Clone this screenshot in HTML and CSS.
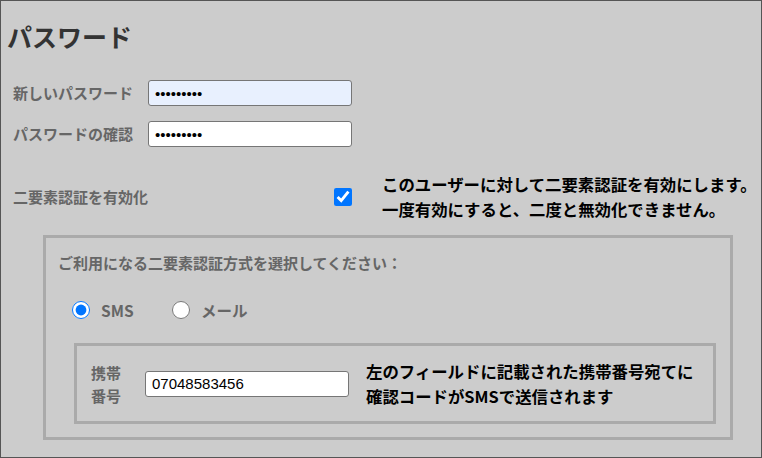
FILE: index.html
```html
<!DOCTYPE html>
<html lang="ja">
<head>
    <meta charset="UTF-8">
    <meta name="viewport" content="width=device-width, initial-scale=1.0">
    <title>パスワード</title>
    <link rel="stylesheet" href="styles.css">
</head>
<body>
    <div class="page">
        <h1 class="title">パスワード</h1>

        <div class="form-row">
            <label class="field-label" for="new-pass">新しいパスワード</label>
            <input type="password" id="new-pass" class="text-input autofilled" value="123456789">
        </div>
        <div class="form-row">
            <label class="field-label" for="confirm-pass">パスワードの確認</label>
            <input type="password" id="confirm-pass" class="text-input" value="123456789">
        </div>

        <!-- 二要素認証 -->
        <div class="form-row twofa-row">
            <label class="field-label" for="twofa">二要素認証を有効化</label>
            <div class="check-cell">
                <input type="checkbox" id="twofa" class="check" checked>
            </div>
            <p class="note">このユーザーに対して二要素認証を有効にします。<br>一度有効にすると、二度と無効化できません。</p>
        </div>

        <div class="method-box">
            <p class="method-title">ご利用になる二要素認証方式を選択してください：</p>
            <div class="radio-row">
                <label class="radio-opt"><input type="radio" name="method" checked>SMS</label>
                <label class="radio-opt"><input type="radio" name="method">メール</label>
            </div>
            <div class="phone-box">
                <label class="phone-label" for="phone">携帯番号</label>
                <input type="text" id="phone" class="text-input" value="07048583456">
                <p class="note">左のフィールドに記載された携帯番号宛てに<br>確認コードがSMSで送信されます</p>
            </div>
        </div>
    </div>
</body>
</html>
```

FILE: styles.css
```css
body {
    margin: 0;
    font-family: "Noto Sans CJK JP", "Liberation Sans", sans-serif;
}

.page {
    height: 458px;
    box-sizing: border-box;
    border: 1px solid #555;
    background-color: #ccc;
    padding-top: 20px;
}

.title {
    margin: 0 0 29px 6px;
    font-size: 25px;
    line-height: 30px;
    font-weight: bold;
    color: #333;
}

.form-row {
    display: flex;
    align-items: center;
    padding-left: 12px;
    margin-bottom: 15px;
}

.field-label {
    width: 135px;
    font-size: 15px;
    line-height: 22px;
    font-weight: bold;
    color: #666;
}

.text-input {
    width: 204px;
    height: 26px;
    box-sizing: border-box;
    margin: 0;
    padding: 0 6px;
    border: 1px solid #767676;
    border-radius: 3px;
    background-color: #fff;
    color: #000;
    font-family: "Liberation Sans", Arial, sans-serif;
    font-size: 15px;
}

.text-input.autofilled {
    background-color: #e8f0fe;
}

.twofa-row {
    margin-top: 25px;
    margin-bottom: 0;
}

.check-cell {
    width: 204px;
    display: flex;
    justify-content: flex-end;
}

.check {
    width: 18px;
    height: 18px;
    margin: 0;
    accent-color: #0075ff;
}

.note {
    margin: 0 0 0 30px;
    font-size: 16.4px;
    line-height: 25px;
    font-weight: bold;
    color: #000;
}

.method-box {
    width: 690px;
    box-sizing: border-box;
    margin: 13px 0 0 42px;
    padding: 14px 14px 13px 12px;
    border: 3px solid #aaa;
}

.method-title {
    margin: 0;
    font-size: 15px;
    line-height: 22px;
    font-weight: bold;
    color: #666;
}

.radio-row {
    display: flex;
    align-items: center;
    height: 18px;
    margin-top: 27px;
    padding-left: 14px;
}

.radio-opt {
    width: 100px;
    display: flex;
    align-items: center;
    font-size: 15.5px;
    font-weight: bold;
    color: #666;
}

.radio-opt input {
    width: 18px;
    height: 18px;
    margin: 0 11px 0 0;
    accent-color: #0075ff;
}

.phone-box {
    width: 642px;
    height: 81px;
    box-sizing: border-box;
    display: flex;
    align-items: center;
    margin: 24px 0 0 16px;
    padding-left: 14px;
    border: 3px solid #aaa;
}

.phone-label {
    width: 30px;
    margin-right: 24px;
    font-size: 15px;
    line-height: 23px;
    font-weight: bold;
    color: #666;
}

.phone-box .note {
    margin-left: 17px;
}
```
